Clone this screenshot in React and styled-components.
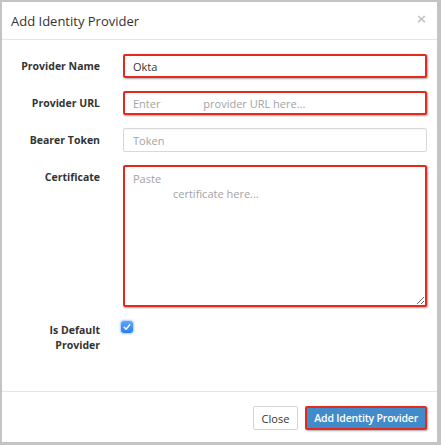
import styled, {createGlobalStyle} from "styled-components";

const GlobalStyle = createGlobalStyle`
    html, body {
        margin: 0;
        padding: 0;
        background: #c4c4c4;
    }

    body {
        font-family: "Open Sans", "Liberation Sans", sans-serif;
        color: #333;
    }
`;

const urlPlaceholder = "Enter" + "\u00a0".repeat(15) + "provider URL here...";
const certPlaceholder = "Paste\n" + "\u00a0".repeat(14) + "certificate here...";

const App = () => {
    return (
        <>
            <GlobalStyle/>
            <Frame>
                <Modal>
                    <Header>
                        <Title>Add Identity Provider</Title>
                        <CloseX>×</CloseX>
                    </Header>
                    <Body>
                        <Label>Provider Name</Label>
                        <Input highlight defaultValue="Okta"/>

                        <Label>Provider URL</Label>
                        <Input highlight placeholder={urlPlaceholder}/>

                        <Label>Bearer Token</Label>
                        <Input placeholder="Token"/>

                        <Label>Certificate</Label>
                        <TextArea highlight placeholder={certPlaceholder}/>

                        <Label multiline>Is Default<br/>Provider</Label>
                        <CheckCell>
                            <CheckBox>
                                <svg width="8" height="8" viewBox="0 0 8 8">
                                    <path d="M1.2 4.3 L3.1 6.2 L6.8 1.6" fill="none" stroke="#fff"
                                          strokeWidth="1.5" strokeLinecap="round" strokeLinejoin="round"/>
                                </svg>
                            </CheckBox>
                        </CheckCell>
                    </Body>
                    <Footer>
                        <Button>Close</Button>
                        <Button primary highlight>Add Identity Provider</Button>
                    </Footer>
                </Modal>
            </Frame>
        </>
    );
};

const Frame = styled.div`
    width: 441px;
    height: 445px;
    padding: 2px 4px 3px 2px;
    box-sizing: border-box;
`;

const Modal = styled.div`
    width: 435px;
    height: 440px;
    background: #fff;
    display: flex;
    flex-direction: column;
`;

const Header = styled.div`
    height: 38px;
    border-bottom: 1px solid #e5e5e5;
    display: flex;
    align-items: center;
    justify-content: space-between;
    padding: 0 10px 0 9px;
    box-sizing: border-box;
`;

const Title = styled.h4`
    margin: 0;
    font-size: 13px;
    font-weight: 400;
    color: #333;
`;

const CloseX = styled.span`
    font-family: "DejaVu Sans", sans-serif;
    font-size: 13px;
    font-weight: 700;
    color: #c4c4c4;
    margin-top: -4px;
`;

const Body = styled.div`
    flex: 1;
    display: grid;
    grid-template-columns: 88px 304px;
    grid-auto-rows: min-content;
    column-gap: 23px;
    row-gap: 13px;
    padding: 14px 10px 0 10px;
    align-content: start;
`;

const Label = styled.label`
    font-size: 10.5px;
    font-weight: 700;
    color: #333;
    text-align: right;
    white-space: nowrap;
    line-height: ${props => props.multiline ? "15px" : "24px"};
    padding-top: ${props => props.multiline ? "3px" : "0"};
`;

const fieldBorder = props => props.highlight
    ? "border: 2px solid #e5291c; box-shadow: 1px 1px 2px rgba(0, 0, 0, 0.35);"
    : "border: 1px solid #d8d8d8; box-shadow: inset 0 1px 1px rgba(0, 0, 0, 0.04);";

const Input = styled.input`
    height: 24px;
    width: 304px;
    box-sizing: border-box;
    ${fieldBorder};
    border-radius: 2px;
    padding: 0 ${props => props.highlight ? "8px" : "9px"};
    font-family: "Open Sans", "Liberation Sans", sans-serif;
    font-size: 11px;
    color: #333;
    outline: none;

    &::placeholder {
        color: #a3a3a3;
    }
`;

const TextArea = styled.textarea`
    height: 142px;
    width: 304px;
    box-sizing: border-box;
    ${fieldBorder};
    border-radius: 2px;
    padding: 4px 8px;
    font-family: "Open Sans", "Liberation Sans", sans-serif;
    font-size: 11px;
    line-height: 15px;
    color: #333;
    outline: none;
    resize: vertical;
    margin: 0;
    display: block;

    &::placeholder {
        color: #a3a3a3;
    }
`;

const CheckCell = styled.div`
    padding: 1px 0 0 0;
    margin-left: -2px;
`;

const CheckBox = styled.span`
    width: 12px;
    height: 12px;
    border-radius: 3px;
    background: linear-gradient(#5aa6f8, #2a7ef2);
    box-shadow: 0 0 2px 1px rgba(80, 150, 250, 0.5);
    display: flex;
    align-items: center;
    justify-content: center;
`;

const Footer = styled.div`
    border-top: 1px solid #e5e5e5;
    padding: 14px 10px 12px 10px;
    display: flex;
    justify-content: flex-end;
    gap: 7px;
`;

const Button = styled.button`
    height: 24px;
    box-sizing: border-box;
    font-family: "Open Sans", "Liberation Sans", sans-serif;
    font-size: ${props => props.primary ? "10.5px" : "11px"};
    font-weight: ${props => props.primary ? 600 : 400};
    letter-spacing: ${props => props.primary ? "-0.2px" : "0"};
    border-radius: 2px;
    padding: 0 ${props => props.primary ? "7px" : "8px"};
    cursor: pointer;
    color: ${props => props.primary ? "#fff" : "#333"};
    background: ${props => props.primary ? "#428bca" : "#fff"};
    border: ${props => props.highlight ? "2px solid #e5291c" : "1px solid #d4d4d4"};
    box-shadow: ${props => props.highlight ? "1px 1px 2px rgba(0, 0, 0, 0.35)" : "none"};
`;

export default App;
